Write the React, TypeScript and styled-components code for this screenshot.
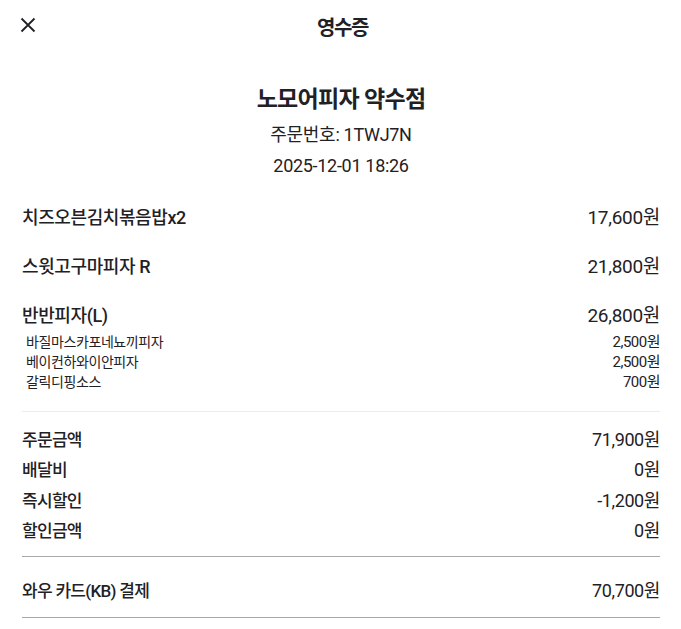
import styled, { createGlobalStyle } from "styled-components";

interface SubItem {
  name: string;
  price: string;
}

interface OrderItem {
  name: string;
  price: string;
  options?: SubItem[];
}

const items: OrderItem[] = [
  { name: "치즈오븐김치볶음밥x2", price: "17,600원" },
  { name: "스윗고구마피자 R", price: "21,800원" },
  {
    name: "반반피자(L)",
    price: "26,800원",
    options: [
      { name: "바질마스카포네뇨끼피자", price: "2,500원" },
      { name: "베이컨하와이안피자", price: "2,500원" },
      { name: "갈릭디핑소스", price: "700원" },
    ],
  },
];

const summary = [
  { label: "주문금액", value: "71,900원" },
  { label: "배달비", value: "0원" },
  { label: "즉시할인", value: "-1,200원" },
  { label: "할인금액", value: "0원" },
];

const GlobalStyle = createGlobalStyle`
  body {
    margin: 0;
    background: #fff;
    font-family: Roboto, "Noto Sans CJK KR", sans-serif;
    color: #1f2125;
  }
`;

const CloseIcon = () => (
  <svg width="16" height="16" viewBox="0 0 16 16" fill="none">
    <path d="M1.5 1.5 L14.5 14.5 M14.5 1.5 L1.5 14.5" stroke="#1f2125" strokeWidth="1.8" />
  </svg>
);

const App = () => {
  return (
    <Page>
      <GlobalStyle />
      <Header>
        <CloseButton>
          <CloseIcon />
        </CloseButton>
        <HeaderTitle>영수증</HeaderTitle>
      </Header>

      <StoreInfo>
        <StoreName>노모어피자 약수점</StoreName>
        <StoreMeta>주문번호: 1TWJ7N</StoreMeta>
        <StoreMeta>2025-12-01 18:26</StoreMeta>
      </StoreInfo>

      <ItemList>
        {items.map((item) => (
          <Item key={item.name}>
            <ItemRow>
              <ItemName>{item.name}</ItemName>
              <ItemPrice>{item.price}</ItemPrice>
            </ItemRow>
            {item.options && (
              <Options>
                {item.options.map((o) => (
                  <OptionRow key={o.name}>
                    <OptionName>{o.name}</OptionName>
                    <OptionPrice>{o.price}</OptionPrice>
                  </OptionRow>
                ))}
              </Options>
            )}
          </Item>
        ))}
      </ItemList>

      <Divider $tone="light" />

      <Summary>
        {summary.map((s) => (
          <SummaryRow key={s.label}>
            <SummaryLabel>{s.label}</SummaryLabel>
            <SummaryValue>{s.value}</SummaryValue>
          </SummaryRow>
        ))}
      </Summary>

      <Divider $tone="dark" />

      <PaymentRow>
        <SummaryLabel>와우 카드(KB) 결제</SummaryLabel>
        <SummaryValue>70,700원</SummaryValue>
      </PaymentRow>

      <Divider $tone="dark" />
    </Page>
  );
};
export default App;

const Page = styled.div`
  width: 681px;
  padding: 0 21px 0 22px;
  box-sizing: border-box;
`;

const Header = styled.header`
  position: relative;
  height: 52px;
  display: flex;
  align-items: center;
  justify-content: center;
`;

const CloseButton = styled.button`
  position: absolute;
  left: -2px;
  top: 17px;
  padding: 0;
  border: none;
  background: none;
  display: flex;
`;

const HeaderTitle = styled.h1`
  margin: 0;
  font-size: 20px;
  font-weight: 700;
  letter-spacing: -1.4px;
  padding-left: 3px;
`;

const StoreInfo = styled.div`
  display: flex;
  flex-direction: column;
  align-items: center;
  padding-top: 30px;
`;

const StoreName = styled.h2`
  margin: 0;
  font-size: 23px;
  font-weight: 700;
  line-height: 36px;
  letter-spacing: -0.7px;
`;

const StoreMeta = styled.div`
  font-size: 18px;
  line-height: 31px;
  letter-spacing: -0.3px;
  &:first-of-type {
    margin-top: 1px;
  }
`;

const ItemList = styled.div`
  display: flex;
  flex-direction: column;
  gap: 21px;
  padding: 23px 0 19px;
`;

const Item = styled.div`
  display: flex;
  flex-direction: column;
`;

const ItemRow = styled.div`
  display: flex;
  justify-content: space-between;
  align-items: center;
  font-size: 18px;
  line-height: 28px;
`;

const ItemName = styled.span`
  font-weight: 500;
  letter-spacing: -0.4px;
`;

const ItemPrice = styled.span`
  font-size: 19px;
  letter-spacing: -0.3px;
`;

const Options = styled.div`
  display: flex;
  flex-direction: column;
  padding: 2px 0 0 4px;
`;

const OptionRow = styled.div`
  display: flex;
  justify-content: space-between;
  align-items: center;
  font-size: 14px;
  line-height: 20px;
`;

const OptionName = styled.span`
  letter-spacing: -0.4px;
`;

const OptionPrice = styled.span`
  font-size: 15px;
  letter-spacing: -0.5px;
`;

const Divider = styled.hr<{ $tone: "light" | "dark" }>`
  margin: 0;
  border: none;
  height: 1px;
  background: ${(p) => (p.$tone === "light" ? "#ececec" : "#a9a9a9")};
`;

const Summary = styled.div`
  display: flex;
  flex-direction: column;
  padding: 13px 0 10px;
`;

const SummaryRow = styled.div`
  display: flex;
  justify-content: space-between;
  align-items: center;
  font-size: 17px;
  line-height: 30.3px;
`;

const SummaryLabel = styled.span`
  font-weight: 500;
  letter-spacing: -0.7px;
`;

const SummaryValue = styled.span`
  font-size: 18px;
  letter-spacing: -0.4px;
`;

const PaymentRow = styled(SummaryRow)`
  padding: 19px 0 11px;
`;
